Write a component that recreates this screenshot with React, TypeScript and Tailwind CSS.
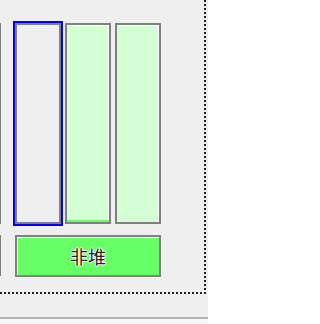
export default function App() {
  return (
    <div className="w-[208px] h-[324px] bg-[#efefef] flex flex-col overflow-hidden font-['Noto_Sans_CJK_SC','Noto_Sans',sans-serif]">
      <div className="w-[206px] h-[294px] shrink-0 border-0 border-r-2 border-b-2 border-dotted border-[#222222] pt-[23px]">
        {/* bars */}
        <div className="flex items-start">
          <div className="w-[1px] h-[201px] bg-[#808080]" />
          <div className="ml-[14px] w-[46px] h-[201px] border-2 border-[#808080] bg-[#efefef] outline-2 outline-solid outline-[#0000ff]" />
          <div className="ml-[4px] w-[46px] h-[201px] border-2 border-[#808080] bg-[#d4ffd4] shadow-[inset_-1px_1px_0_#ffffff] flex flex-col justify-end">
            <div className="h-[2px] bg-[#66ff66]" />
          </div>
          <div className="ml-[4px] w-[46px] h-[201px] border-2 border-[#808080] bg-[#d4ffd4] shadow-[inset_-1px_1px_0_#ffffff]" />
        </div>
        {/* button row */}
        <div className="flex items-start mt-[11px]">
          <div className="w-[1px] h-[41px] bg-[#808080]" />
          <button className="ml-[14px] w-[146px] h-[42px] border-2 border-[#808080] bg-[#66ff66] shadow-[inset_1px_1px_0_#ffffff] flex items-center justify-center text-[18px] leading-none text-[#222222] [text-shadow:1px_0_#fff,-1px_0_#fff,0_1px_#fff,0_-1px_#fff]">
            非堆
          </button>
        </div>
      </div>
      <div className="mt-[23px] h-[2px] shrink-0 bg-[#b4b4b4]" />
      <div className="flex-1 bg-[#f6f6f6]" />
    </div>
  );
}
